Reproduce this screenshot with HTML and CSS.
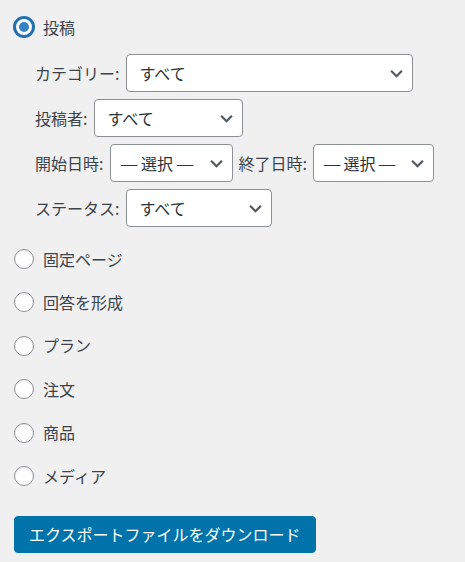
FILE: index.html
```html
<!DOCTYPE html>
<html lang="ja">
<head>
<meta charset="utf-8">
<link rel="stylesheet" href="styles.css">
</head>
<body>
<div class="page">
  <div class="opt first">
    <span class="radio checked"></span>
    <span class="opt-label">投稿</span>
  </div>
  <div class="filters">
    <div class="frow">
      <span class="flabel">カテゴリー:</span>
      <div class="select w-cat"><span>すべて</span><svg class="chev" viewBox="0 0 16 10" width="15" height="9"><path d="M2 2 L8 8 L14 2" fill="none" stroke="#50575e" stroke-width="2.4"/></svg></div>
    </div>
    <div class="frow">
      <span class="flabel">投稿者:</span>
      <div class="select w-author"><span>すべて</span><svg class="chev" viewBox="0 0 16 10" width="15" height="9"><path d="M2 2 L8 8 L14 2" fill="none" stroke="#50575e" stroke-width="2.4"/></svg></div>
    </div>
    <div class="frow">
      <span class="flabel">開始日時:</span>
      <div class="select w-start narrow"><span><span class="dash">—</span> 選択 <span class="dash">—</span></span><svg class="chev" viewBox="0 0 16 10" width="15" height="9"><path d="M2 2 L8 8 L14 2" fill="none" stroke="#50575e" stroke-width="2.4"/></svg></div>
      <span class="flabel second">終了日時:</span>
      <div class="select w-end narrow"><span><span class="dash">—</span> 選択 <span class="dash">—</span></span><svg class="chev" viewBox="0 0 16 10" width="15" height="9"><path d="M2 2 L8 8 L14 2" fill="none" stroke="#50575e" stroke-width="2.4"/></svg></div>
    </div>
    <div class="frow">
      <span class="flabel">ステータス:</span>
      <div class="select w-status"><span>すべて</span><svg class="chev" viewBox="0 0 16 10" width="15" height="9"><path d="M2 2 L8 8 L14 2" fill="none" stroke="#50575e" stroke-width="2.4"/></svg></div>
    </div>
  </div>
  <div class="list">
    <div class="opt"><span class="radio"></span><span class="opt-label">固定ページ</span></div>
    <div class="opt"><span class="radio"></span><span class="opt-label">回答を形成</span></div>
    <div class="opt"><span class="radio"></span><span class="opt-label">プラン</span></div>
    <div class="opt"><span class="radio"></span><span class="opt-label">注文</span></div>
    <div class="opt"><span class="radio"></span><span class="opt-label">商品</span></div>
    <div class="opt"><span class="radio"></span><span class="opt-label">メディア</span></div>
  </div>
  <div class="actions">
    <button class="btn" type="button">エクスポートファイルをダウンロード</button>
  </div>
</div>
</body>
</html>
```

FILE: styles.css
```css
* { box-sizing: border-box; }
html, body {
  margin: 0;
  padding: 0;
  background: #f0f0f1;
}
body {
  font-family: "Noto Sans CJK JP", "Noto Sans", sans-serif;
  font-size: 16px;
  line-height: 1.3;
  color: #3c434a;
}
.page {
  padding: 17px 0 0 14px;
  width: 465px;
  height: 562px;
  overflow: hidden;
}
.opt {
  display: flex;
  align-items: center;
  height: 20px;
}
.radio {
  flex: none;
  width: 20px;
  height: 20px;
  border-radius: 50%;
  border: 1px solid #8c8f94;
  background: #fff;
  display: flex;
  align-items: center;
  justify-content: center;
  box-shadow: inset 0 1px 2px rgba(0,0,0,0.08);
}
.radio.checked {
  border: 2px solid #2271b1;
  box-shadow: 0 0 0 1px #2271b1;
}
.radio.checked::before {
  content: "";
  width: 10px;
  height: 10px;
  border-radius: 50%;
  background: #3582c4;
}
.opt-label {
  margin-left: 9px;
  white-space: nowrap;
}
.filters {
  margin-top: 17px;
  padding-left: 21px;
  display: flex;
  flex-direction: column;
  gap: 7px;
}
.frow {
  display: flex;
  align-items: center;
  height: 38px;
}
.flabel {
  margin-right: 7px;
  white-space: nowrap;
}
.flabel.second {
  margin-left: 5px;
  margin-right: 6px;
}
.select {
  height: 38px;
  border: 1px solid #8c8f94;
  border-radius: 4px;
  background: #fff;
  display: flex;
  align-items: center;
  justify-content: space-between;
  padding: 0 8px 0 12px;
  color: #2c3338;
  white-space: nowrap;
}
.select.narrow { padding-left: 10px; }
.dash {
  display: inline-block;
  width: 1em;
  transform: scaleX(1.3);
  text-align: center;
}
.chev { flex: none; }
.w-cat { width: 287px; }
.w-author { width: 149px; }
.w-start { width: 123px; }
.w-end { width: 121px; }
.w-status { width: 146px; }
.list {
  margin-top: 22px;
  display: flex;
  flex-direction: column;
  gap: 23.4px;
}
.actions {
  margin-top: 30px;
}
.btn {
  height: 37px;
  padding: 0 14px;
  background: #0073aa;
  border: 1px solid #0073aa;
  border-radius: 4px;
  color: #fff;
  font-family: inherit;
  font-size: 16px;
  line-height: 1;
  cursor: pointer;
}
```
